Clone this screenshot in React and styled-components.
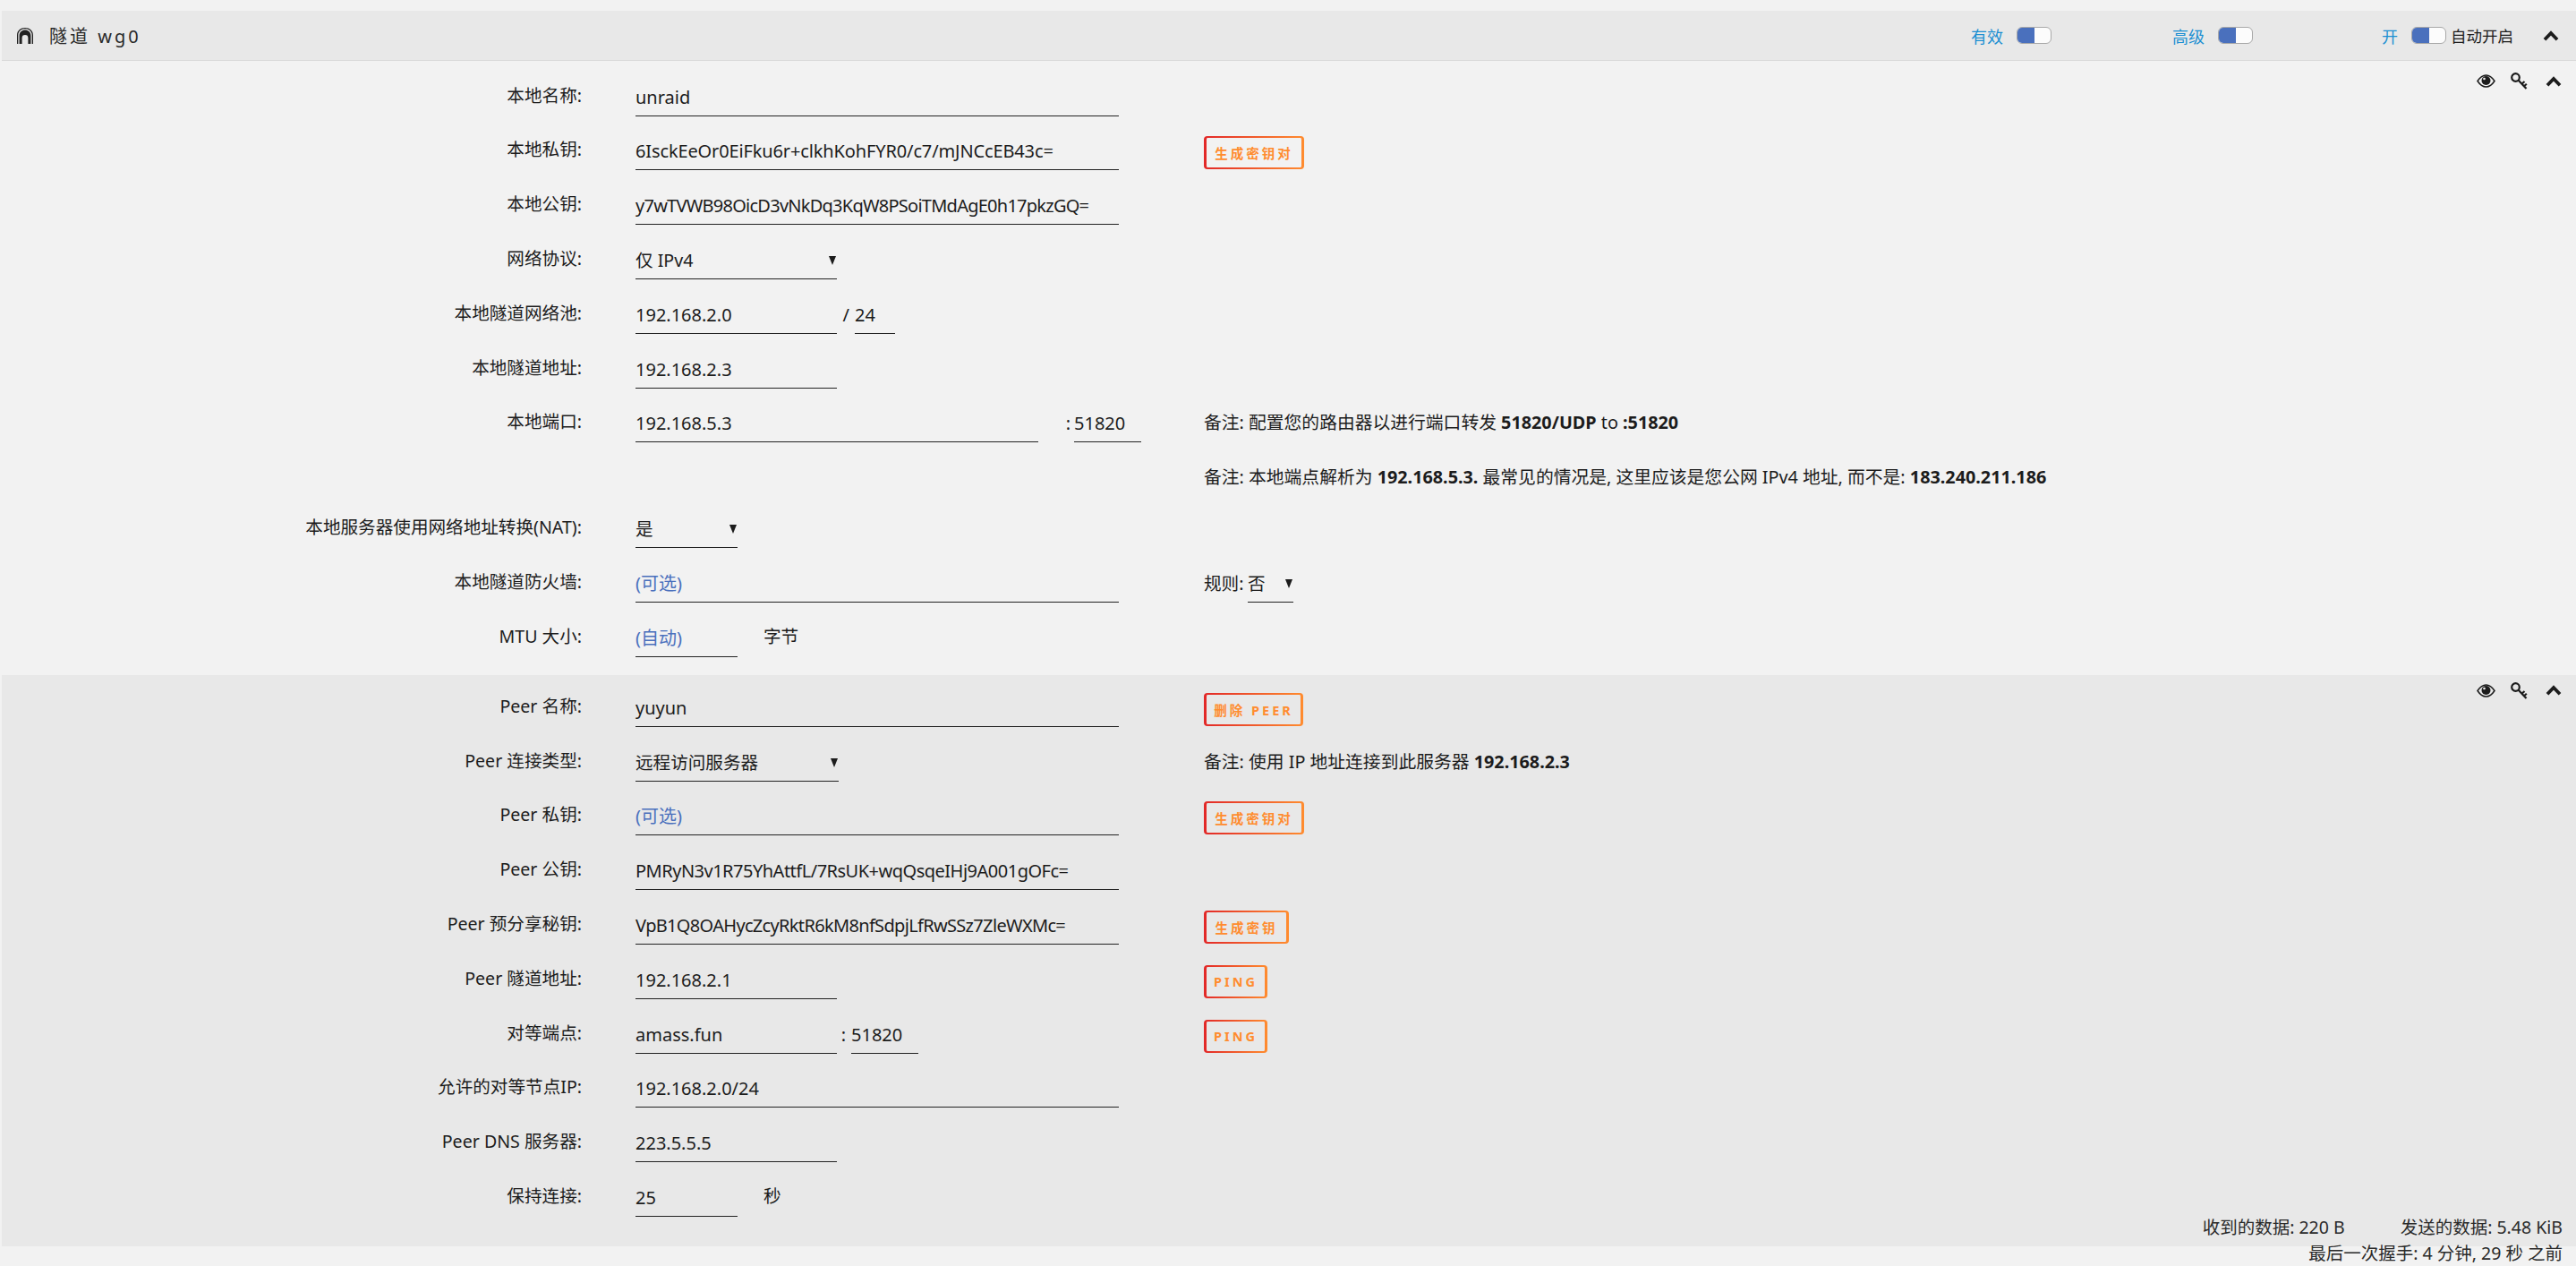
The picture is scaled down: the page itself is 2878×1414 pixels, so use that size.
import React from "react";
import styled, { createGlobalStyle } from "styled-components";

const Global = createGlobalStyle`
  html, body { margin: 0; padding: 0; background: #f2f2f2; }
  body { font-family: "Noto Sans", "Noto Sans CJK SC", sans-serif; font-size: 20px; color: #1c1c1c; overflow: hidden; }
`;

const Page = styled.div`
  width: 2878px;
  height: 1414px;
  padding: 12px 0 0 2px;
  box-sizing: border-box;
`;

const Header = styled.header`
  display: flex;
  align-items: center;
  height: 56px;
  box-sizing: border-box;
  background: #e8e8e8;
  border-bottom: 1px solid #d9d9d9;
  padding-left: 16px;
`;
const Title = styled.div`
  display: flex;
  align-items: center;
  gap: 17px;
  flex: 1;
  font-size: 20px;
  letter-spacing: 3px;
  color: #2a2a2a;
`;
const HeaderControl = styled.div`
  display: flex;
  align-items: center;
  width: ${(p) => (p.$w ? `${p.$w}px` : "auto")};
`;
const StateLabel = styled.span`
  font-size: 18px;
  color: #1b8fd2;
  width: ${(p) => p.$w}px;
`;
const Toggle = styled.span`
  display: inline-flex;
  width: 39px;
  height: 19px;
  box-sizing: border-box;
  border: 1px solid #a8a8a8;
  border-radius: 6px;
  overflow: hidden;
  background: #fcfcfc;
  &::before {
    content: "";
    width: 19px;
    background: #4a70bd;
  }
`;
const AutoText = styled.span`
  font-size: 17.5px;
  margin-left: 5px;
  color: #1c1c1c;
`;
const HeaderChevron = styled.span`
  display: inline-flex;
  margin: 0 19px 0 33px;
`;

const Section = styled.section`
  position: relative;
  display: flex;
  flex-direction: column;
  gap: 3.8px;
  padding: ${(p) => p.$pad};
  background: var(--bg);
  --bg: ${(p) => p.$bg};
`;
const Tools = styled.div`
  position: absolute;
  top: ${(p) => p.$top}px;
  right: 16px;
  display: flex;
  align-items: center;
  gap: 17px;
  svg:last-child { margin-left: 3px; }
`;

const Row = styled.div`
  display: flex;
  align-items: flex-end;
  height: ${(p) => p.$h || 57}px;
`;
const Label = styled.div`
  width: 648px;
  flex: none;
  text-align: right;
  font-size: 19.6px;
  line-height: 24px;
  padding-bottom: 11px;
  margin-right: 60px;
  white-space: nowrap;
`;
const FieldCol = styled.div`
  display: flex;
  align-items: flex-end;
  width: 635px;
  flex: none;
`;
const SideCol = styled.div`
  display: flex;
  align-items: flex-end;
  flex: 1;
  min-width: 0;
`;
const Input = styled.div`
  width: ${(p) => p.$w}px;
  flex: none;
  box-sizing: border-box;
  height: 33px;
  line-height: 24px;
  padding-bottom: 8px;
  border-bottom: 1px solid #222;
  white-space: nowrap;
  letter-spacing: ${(p) => p.$track || 0}px;
  color: ${(p) => (p.$hint ? "#4a70bd" : "#1c1c1c")};
`;
const SelectBox = styled(Input)`
  display: flex;
  justify-content: space-between;
  align-items: flex-start;
  font-size: 19.6px;
  &::after {
    content: "";
    margin-top: 7px;
    margin-right: 1px;
    border-left: 4.5px solid transparent;
    border-right: 4.5px solid transparent;
    border-top: 10px solid #1c1c1c;
  }
`;
const Joiner = styled.span`
  width: ${(p) => p.$w}px;
  flex: none;
  text-align: right;
  line-height: 24px;
  padding-bottom: 9px;
  padding-right: ${(p) => p.$r || 0}px;
  box-sizing: border-box;
`;
const Unit = styled.span`
  font-size: 19.6px;
  line-height: 24px;
  padding-bottom: 11px;
  margin-left: 29px;
`;
const Note = styled.div`
  font-size: 19.8px;
  line-height: 24px;
  padding-bottom: ${(p) => (p.$low ? 6 : 10)}px;
  white-space: nowrap;
  b { font-weight: 700; }
`;
const RuleLabel = styled.span`
  font-size: 19.6px;
  line-height: 24px;
  padding-bottom: 9px;
  width: 49px;
  flex: none;
  white-space: nowrap;
`;
const ActionButton = styled.div`
  display: inline-flex;
  align-items: center;
  justify-content: center;
  box-sizing: border-box;
  width: ${(p) => p.$w}px;
  height: 37px;
  margin-bottom: 1px;
  border-style: solid;
  border-color: transparent;
  border-width: 2px 3px;
  border-radius: 4px;
  background: linear-gradient(var(--bg), var(--bg)) padding-box,
    linear-gradient(90deg, #e22828, #ff8c2f) border-box;
  color: #ff8c2f;
  font-size: 14.5px;
  font-weight: 700;
  letter-spacing: 3px;
  white-space: nowrap;
`;
const Stats = styled.div`
  margin-top: -36px;
  padding-right: 15px;
  font-size: 19.5px;
  line-height: 29px;
  text-align: right;
  color: #2a2a2a;
  position: relative;
`;
const StatsLine = styled.div`
  display: flex;
  justify-content: flex-end;
  gap: 62px;
`;

const TunnelIcon = () => (
  <svg width="20" height="20" viewBox="0 0 20 20">
    <path d="M1 19V9.5C1 4 5 1 10 1s9 3 9 8.5V19h-1.3V9.5C17.7 5 14.5 2.3 10 2.3S2.3 5 2.3 9.5V19z" fill="#222" />
    <path d="M3.6 19V10C3.6 6 6.5 3.6 10 3.6S16.4 6 16.4 10v9h-3v-6.5a3.4 3.4 0 0 0-6.8 0V19z" fill="#222" />
  </svg>
);
const Eye = () => (
  <svg width="21" height="15" viewBox="0 0 21 15">
    <path d="M1 7.5C4 3 7 1 10.5 1S17 3 20 7.5C17 12 14 14 10.5 14S4 12 1 7.5z" fill="none" stroke="#1c1c1c" strokeWidth="1.5" />
    <circle cx="10.5" cy="7" r="5" fill="#1c1c1c" />
    <circle cx="8.5" cy="5" r="1.3" fill="#f2f2f2" />
  </svg>
);
const KeyIcon = () => (
  <svg width="19" height="19" viewBox="0 0 19 19">
    <circle cx="5.5" cy="5.5" r="4.3" fill="none" stroke="#1c1c1c" strokeWidth="2.2" />
    <path d="M8.5 8.5L17.5 18M12.5 12.8L15.5 10M15 15.2L17.8 12.7" fill="none" stroke="#1c1c1c" strokeWidth="2.2" />
  </svg>
);
const Chevron = () => (
  <svg width="18" height="12" viewBox="0 0 18 12">
    <path d="M2 10.2L9 3l7 7.2" fill="none" stroke="#1c1c1c" strokeWidth="3.8" />
  </svg>
);
const SectionTools = ({ top }) => (
  <Tools $top={top}>
    <Eye />
    <KeyIcon />
    <Chevron />
  </Tools>
);

export default function App() {
  return (
    <Page>
      <Global />
      <Header>
        <Title>
          <TunnelIcon />
          <span>隧道 wg0</span>
        </Title>
        <HeaderControl $w={225}>
          <StateLabel $w={51}>有效</StateLabel>
          <Toggle />
        </HeaderControl>
        <HeaderControl $w={234}>
          <StateLabel $w={51}>高级</StateLabel>
          <Toggle />
        </HeaderControl>
        <HeaderControl>
          <StateLabel $w={33}>开</StateLabel>
          <Toggle />
          <AutoText>自动开启</AutoText>
          <HeaderChevron>
            <Chevron />
          </HeaderChevron>
        </HeaderControl>
      </Header>

      <Section $bg="#f2f2f2" $pad="4.7px 0 20px">
        <SectionTools top={13} />
        <Row>
          <Label>本地名称:</Label>
          <FieldCol><Input $w={540}>unraid</Input></FieldCol>
        </Row>
        <Row>
          <Label>本地私钥:</Label>
          <FieldCol><Input $w={540} $track={-0.13}>6IsckEeOr0EiFku6r+clkhKohFYR0/c7/mJNCcEB43c=</Input></FieldCol>
          <SideCol><ActionButton $w={112}>生成密钥对</ActionButton></SideCol>
        </Row>
        <Row>
          <Label>本地公钥:</Label>
          <FieldCol><Input $w={540} $track={-0.75}>y7wTVWB98OicD3vNkDq3KqW8PSoiTMdAgE0h17pkzGQ=</Input></FieldCol>
        </Row>
        <Row>
          <Label>网络协议:</Label>
          <FieldCol><SelectBox $w={225}>仅 IPv4</SelectBox></FieldCol>
        </Row>
        <Row>
          <Label>本地隧道网络池:</Label>
          <FieldCol>
            <Input $w={225}>192.168.2.0</Input>
            <Joiner $w={20} $r={6}>/</Joiner>
            <Input $w={45}>24</Input>
          </FieldCol>
        </Row>
        <Row>
          <Label>本地隧道地址:</Label>
          <FieldCol><Input $w={225}>192.168.2.3</Input></FieldCol>
        </Row>
        <Row>
          <Label>本地端口:</Label>
          <FieldCol>
            <Input $w={450}>192.168.5.3</Input>
            <Joiner $w={40} $r={4}>:</Joiner>
            <Input $w={75}>51820</Input>
          </FieldCol>
          <SideCol>
            <Note>备注: 配置您的路由器以进行端口转发 <b>51820/UDP</b> to <b>:51820</b></Note>
          </SideCol>
        </Row>
        <Row $h={53.1}>
          <Label />
          <FieldCol />
          <SideCol>
            <Note $low>备注: 本地端点解析为 <b>192.168.5.3.</b> 最常见的情况是, 这里应该是您公网 IPv4 地址, 而不是: <b>183.240.211.186</b></Note>
          </SideCol>
        </Row>
        <Row>
          <Label>本地服务器使用网络地址转换(NAT):</Label>
          <FieldCol><SelectBox $w={114}>是</SelectBox></FieldCol>
        </Row>
        <Row>
          <Label>本地隧道防火墙:</Label>
          <FieldCol><Input $w={540} $hint>(可选)</Input></FieldCol>
          <SideCol>
            <RuleLabel>规则:</RuleLabel>
            <SelectBox $w={51}>否</SelectBox>
          </SideCol>
        </Row>
        <Row>
          <Label>MTU 大小:</Label>
          <FieldCol>
            <Input $w={114} $hint>(自动)</Input>
            <Unit>字节</Unit>
          </FieldCol>
        </Row>
      </Section>

      <Section $bg="#e8e8e8" $pad="1px 0 33px">
        <SectionTools top={8} />
        <Row>
          <Label>Peer 名称:</Label>
          <FieldCol><Input $w={540}>yuyun</Input></FieldCol>
          <SideCol><ActionButton $w={111}>删除 PEER</ActionButton></SideCol>
        </Row>
        <Row>
          <Label>Peer 连接类型:</Label>
          <FieldCol><SelectBox $w={227}>远程访问服务器</SelectBox></FieldCol>
          <SideCol>
            <Note>备注: 使用 IP 地址连接到此服务器 <b>192.168.2.3</b></Note>
          </SideCol>
        </Row>
        <Row>
          <Label>Peer 私钥:</Label>
          <FieldCol><Input $w={540} $hint>(可选)</Input></FieldCol>
          <SideCol><ActionButton $w={112}>生成密钥对</ActionButton></SideCol>
        </Row>
        <Row>
          <Label>Peer 公钥:</Label>
          <FieldCol><Input $w={540} $track={-0.5}>PMRyN3v1R75YhAttfL/7RsUK+wqQsqeIHj9A001gOFc=</Input></FieldCol>
        </Row>
        <Row>
          <Label>Peer 预分享秘钥:</Label>
          <FieldCol><Input $w={540} $track={-0.67}>VpB1Q8OAHycZcyRktR6kM8nfSdpjLfRwSSz7ZleWXMc=</Input></FieldCol>
          <SideCol><ActionButton $w={95}>生成密钥</ActionButton></SideCol>
        </Row>
        <Row>
          <Label>Peer 隧道地址:</Label>
          <FieldCol><Input $w={225}>192.168.2.1</Input></FieldCol>
          <SideCol><ActionButton $w={71}>PING</ActionButton></SideCol>
        </Row>
        <Row>
          <Label>对等端点:</Label>
          <FieldCol>
            <Input $w={225}>amass.fun</Input>
            <Joiner $w={16} $r={6}>:</Joiner>
            <Input $w={75}>51820</Input>
          </FieldCol>
          <SideCol><ActionButton $w={71}>PING</ActionButton></SideCol>
        </Row>
        <Row>
          <Label>允许的对等节点IP:</Label>
          <FieldCol><Input $w={540}>192.168.2.0/24</Input></FieldCol>
        </Row>
        <Row>
          <Label>Peer DNS 服务器:</Label>
          <FieldCol><Input $w={225}>223.5.5.5</Input></FieldCol>
        </Row>
        <Row>
          <Label>保持连接:</Label>
          <FieldCol>
            <Input $w={114}>25</Input>
            <Unit>秒</Unit>
          </FieldCol>
        </Row>
      </Section>

      <Stats>
        <StatsLine>
          <span>收到的数据: 220 B</span>
          <span>发送的数据: 5.48 KiB</span>
        </StatsLine>
        <div>最后一次握手: 4 分钟, 29 秒 之前</div>
      </Stats>
    </Page>
  );
}
